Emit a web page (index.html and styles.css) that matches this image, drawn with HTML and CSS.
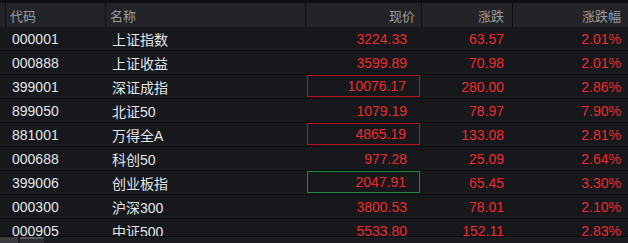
FILE: index.html
```html
<!DOCTYPE html>
<html>
<head>
<meta charset="utf-8">
<link rel="stylesheet" href="styles.css">
</head>
<body>
<div class="panel">
  <div class="table">
    <div class="row head">
      <div class="c lead"></div>
      <div class="c code">代码</div>
      <div class="c name">名称</div>
      <div class="c num price">现价</div>
      <div class="c num chg">涨跌</div>
      <div class="c num pct">涨跌幅</div>
    </div>
    <div class="row"><div class="c lead"></div><div class="c code">000001</div><div class="c name">上证指数</div><div class="c num price up">3224.33</div><div class="c num chg up">63.57</div><div class="c num pct up">2.01%</div></div>
    <div class="row"><div class="c lead"></div><div class="c code">000888</div><div class="c name">上证收益</div><div class="c num price up">3599.89</div><div class="c num chg up">70.98</div><div class="c num pct up">2.01%</div></div>
    <div class="row"><div class="c lead"></div><div class="c code">399001</div><div class="c name">深证成指</div><div class="c num price up"><span class="box red">10076.17</span></div><div class="c num chg up">280.00</div><div class="c num pct up">2.86%</div></div>
    <div class="row"><div class="c lead"></div><div class="c code">899050</div><div class="c name">北证50</div><div class="c num price up">1079.19</div><div class="c num chg up">78.97</div><div class="c num pct up">7.90%</div></div>
    <div class="row"><div class="c lead"></div><div class="c code">881001</div><div class="c name">万得全A</div><div class="c num price up"><span class="box red">4865.19</span></div><div class="c num chg up">133.08</div><div class="c num pct up">2.81%</div></div>
    <div class="row"><div class="c lead"></div><div class="c code">000688</div><div class="c name">科创50</div><div class="c num price up">977.28</div><div class="c num chg up">25.09</div><div class="c num pct up">2.64%</div></div>
    <div class="row"><div class="c lead"></div><div class="c code">399006</div><div class="c name">创业板指</div><div class="c num price up"><span class="box green">2047.91</span></div><div class="c num chg up">65.45</div><div class="c num pct up">3.30%</div></div>
    <div class="row"><div class="c lead"></div><div class="c code">000300</div><div class="c name">沪深300</div><div class="c num price up">3800.53</div><div class="c num chg up">78.01</div><div class="c num pct up">2.10%</div></div>
    <div class="row"><div class="c lead"></div><div class="c code">000905</div><div class="c name">中证500</div><div class="c num price up">5533.80</div><div class="c num chg up">152.11</div><div class="c num pct up">2.83%</div></div>
  </div>
  <div class="scrollbar">
    <div class="sb-a"></div>
    <div class="sb-b"></div>
  </div>
</div>
</body>
</html>
```
FILE: styles.css
```css
html, body {
  margin: 0;
  padding: 0;
  background: #16181c;
}
.panel {
  width: 628px;
  height: 243px;
  display: flex;
  flex-direction: column;
  background: #16181c;
  font-family: "Liberation Sans", "Noto Sans CJK SC", sans-serif;
  font-size: 14px;
  overflow: hidden;
}
.table {
  height: 236px;
  overflow: hidden;
  border-top: 3px solid #0e0f11;
  box-sizing: border-box;
  flex: none;
}
.row {
  display: grid;
  grid-template-columns: 5px 100px 200px 116px 91px 116px;
  height: 24px;
  border-bottom: 1px solid #0c0d10;
  box-sizing: border-box;
  color: #e4e6ea;
}
.row.head {
  height: 24px;
  background: #232428;
  border-bottom: none;
  color: #9a9ca0;
  font-size: 13px;
}
.row.head .c {
  border-left: 1px solid #0e0f11;
}
.row.head .c.lead {
  border-left: none;
}
.c {
  display: flex;
  align-items: center;
  white-space: nowrap;
  box-sizing: border-box;
}
.code {
  padding-left: 7px;
}
.name {
  padding-left: 7px;
}
.row.head .code { padding-left: 4px; }
.row.head .name { padding-left: 4px; }
.num {
  justify-content: flex-end;
}
.price { padding-right: 14px; }
.chg { padding-right: 8px; }
.pct { padding-right: 7px; }
.row.head .price { padding-right: 6px; }
.row.head .chg { padding-right: 8px; }
.row.head .pct { padding-right: 7px; }
.row .price { position: relative; }
.up {
  color: #ee2a30;
}
.box {
  position: absolute;
  left: 2px;
  right: 1px;
  top: 0;
  bottom: 1px;
  display: flex;
  align-items: center;
  justify-content: flex-end;
  padding-right: 13px;
  border: 1px solid #b8121e;
}
.box.green {
  border-color: #1f8a3e;
}
.scrollbar {
  flex: none;
  height: 7px;
  border-top: 1px solid #0a0b0d;
  box-sizing: border-box;
  background: #1b1c20;
  display: flex;
  gap: 2px;
}
.sb-a {
  width: 18px;
  background: #3a3b3f;
}
.sb-b {
  width: 24px;
  background: #2c2d31;
  border-top: 2px solid #55565a;
  box-sizing: border-box;
}
```
